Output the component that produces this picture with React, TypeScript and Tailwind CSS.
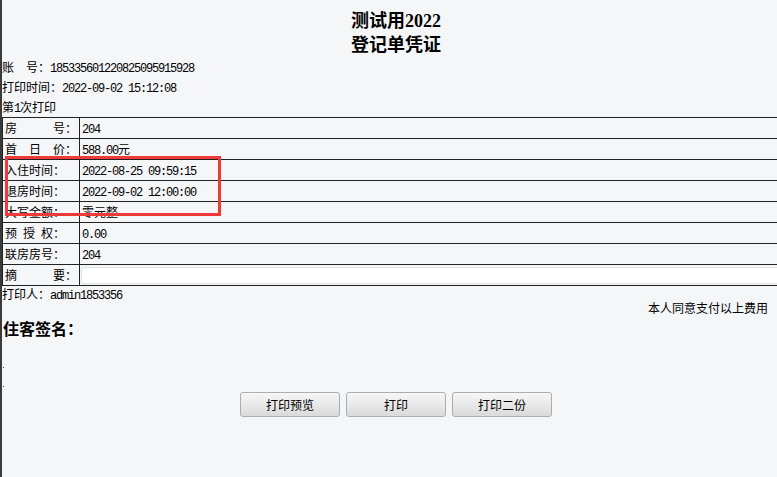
import React from "react";

const mono = "font-['Liberation_Mono',monospace] tracking-[-1.2px] leading-none";

// wrap ascii runs in the narrow mono font, leave CJK in Noto
const mixed = (text: string) =>
  text.split(/([\x00-\x7f]+)/).map((part, i) =>
    /^[\x00-\x7f]+$/.test(part) ? (
      <span key={i} className={mono}>
        {part}
      </span>
    ) : (
      <span key={i}>{part}</span>
    )
  );

const rows: [string, string | null][] = [
  ["房　　　号：", "204"],
  ["首　日　价：", "588.00元"],
  ["入住时间：", "2022-08-25 09:59:15"],
  ["退房时间：", "2022-09-02 12:00:00"],
  ["大写金额：", "零元整"],
  ["预 授 权：", "0.00"],
  ["联房房号：", "204"],
  ["摘　　　要：", null],
];

const PrintButton = ({ label }: { label: string }) => (
  <button className="w-[100px] h-[25px] rounded-[3px] border border-[#adadad] bg-linear-to-b from-[#f7f7f7] to-[#dadada] text-[12px] text-black">
    {label}
  </button>
);

export default function App() {
  return (
    <div className="relative h-[477px] w-full overflow-hidden bg-[#f5f6f8] border-l-2 border-[#3a3a3a] text-[12px] text-black font-['Noto_Sans_CJK_SC',sans-serif]">
      {/* title */}
      <div className="pt-[9px] pl-[13px] text-center text-[18px] leading-[24px] font-bold font-['Liberation_Serif','Noto_Sans_CJK_SC',serif]">
        <div className="h-[24px]">测试用2022</div>
        <div className="h-[24px]">登记单凭证</div>
      </div>

      <div className="whitespace-pre">
        <div className="h-[20px] leading-[20px]">账　号：{mixed("185335601220825095915928")}</div>
        <div className="h-[20px] leading-[20px]">打印时间：{mixed("2022-09-02 15:12:08")}</div>
        <div className="h-[20px] leading-[20px]">第{mixed("1")}次打印</div>
      </div>

      {/* detail table */}
      <div className="border-t border-l border-[#222]">
        {rows.map(([label, value]) => (
          <div key={label} className="flex h-[21px] border-b border-[#222]">
            <div className="w-[77px] shrink-0 border-r border-[#222] pl-[2px] leading-[20px] whitespace-pre">
              {mixed(label)}
            </div>
            {value === null ? (
              <div className="flex-1 pl-[1px] pt-[2px]">
                <div className="h-[17px] bg-white border border-r-0 border-[#e2e2e2] rounded-l-[3px]" />
              </div>
            ) : (
              <div className="flex-1 pl-[2px] leading-[20px] whitespace-pre">
                {mixed(value)}
              </div>
            )}
          </div>
        ))}
      </div>

      <div className="h-[15px] leading-[15px]">打印人：{mixed("admin1853356")}</div>
      <div className="h-[14px] leading-[14px] text-right pr-[9px]">本人同意支付以上费用</div>
      <div className="mt-[3px] h-[20px] leading-[20px] pl-[1px] text-[16px] font-bold">住客签名：</div>

      <div className="mt-[29px] ml-[1px] w-px h-px bg-[#333]" />
      <div className="mt-[18px] ml-[1px] w-px h-px bg-[#333]" />

      <div className="mt-[5px] pl-[13px] flex justify-center gap-[6px]">
        <PrintButton label="打印预览" />
        <PrintButton label="打印" />
        <PrintButton label="打印二份" />
      </div>

      {/* annotation box */}
      <div className="absolute left-[3px] top-[156px] w-[216px] h-[60px] border-[3px] border-[#f03a3a]" />
    </div>
  );
}
